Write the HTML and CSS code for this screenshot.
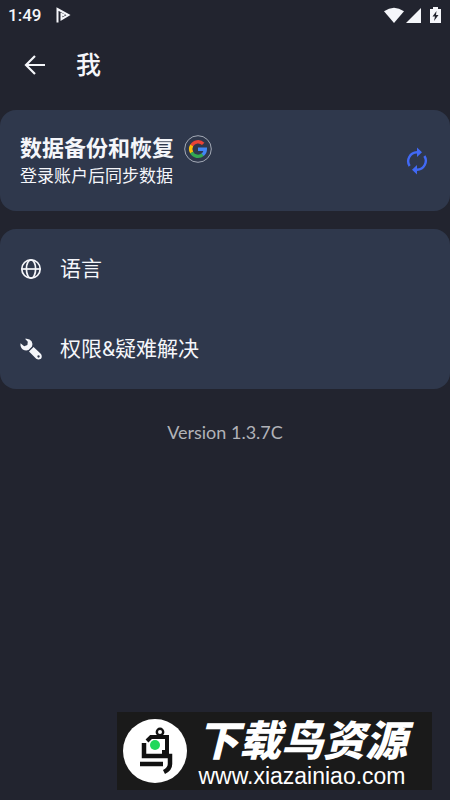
FILE: index.html
```html
<!DOCTYPE html>
<html lang="zh-CN">
<head>
<meta charset="utf-8">
<meta name="viewport" content="width=device-width, initial-scale=1">
<title>我</title>
<link rel="stylesheet" href="styles.css">
</head>
<body>
<div class="status">
  <span class="clock">1:49</span>
  <svg class="play" width="16" height="16" viewBox="0 0 16 16" fill="none" stroke="currentColor" stroke-width="2"><path d="M2.500 15.500V2L13.500 8 6.500 12.200V7l3 1.500"/></svg>
  <svg class="signals" width="58" height="18" viewBox="0 0 58 18" fill="currentColor"><path d="M0 5.200Q10 -1.800 20 5.200L10 17z"/><path d="M37 2v15H22z"/><path fill-rule="evenodd" d="M49 1h5v2h3v14H46V3h3zM52.500 5L48.500 10.500h2.500L50 15l4.500-6H52z"/></svg>
</div>
<header class="topbar">
  <button class="icon-button" type="button" aria-label="返回">
    <svg width="22" height="22" viewBox="0 0 22 22" fill="none" stroke="currentColor" stroke-width="2.200"><path d="M21 11H2.500M11 2L2 11l9 9"/></svg>
  </button>
  <h1 class="title">我</h1>
</header>
<main class="content">
  <section class="card backup">
    <div class="backup-text">
      <h2 class="backup-title">数据备份和恢复
        <svg width="28" height="28" viewBox="0 0 28 28" fill="none"><circle cx="14" cy="14" r="13.300" stroke="#a3a9b5"/><g stroke-width="3.400"><path stroke="#ea4335" d="M7.700 10.500A7.300 7.300 0 0 1 19.200 8.900"/><path stroke="#fbbc05" d="M7.700 10.300a7.300 7.300 0 0 0 0 7.400"/><path stroke="#34a853" d="M7.600 17.500a7.300 7.300 0 0 0 11.300 2"/><path stroke="#4285f4" d="M14 14.200h7.300a7.300 7.300 0 0 1-2.600 5.500"/></g></svg>
      </h2>
      <p class="backup-note">登录账户后同步数据</p>
    </div>
    <button class="icon-button sync" type="button" aria-label="同步">
      <svg width="22" height="28" viewBox="0 0 22 28"><g fill="none" stroke="currentColor" stroke-width="2.400"><path d="M3.600 19A9 9 0 0 1 11 5.200h1"/><path d="M18.400 9A9 9 0 0 1 11 22.800h-1"/></g><path fill="currentColor" d="M11 .5L16 5.200 11 10zM11 18v9.500L6 22.800z"/></svg>
    </button>
  </section>
  <nav class="card menu">
    <a class="row" href="#language">
      <svg width="22" height="22" viewBox="0 0 22 22" fill="none" stroke="currentColor" stroke-width="1.700"><circle cx="11" cy="11" r="9.200"/><ellipse cx="11" cy="11" rx="4.600" ry="9.200"/><path d="M2 11h18"/></svg>
      <span>语言</span>
    </a>
    <a class="row" href="#permissions">
      <svg width="22" height="22" viewBox="0 0 22 22" fill="currentColor"><path d="M5 .8Q9.500 0 11.600 3.200 13 5.600 12 8.500L8.500 12Q5.500 13 2.800 11.400 0 9.300.5 5.200L4.200 8.200 7.400 7 7.800 3.800z"/><path fill-rule="evenodd" d="M9 13.600L13.600 9 21 16Q22.500 18.500 21 20.700 18.500 22.300 16.200 20.700zM18.500 17.300a1.200 1.200 0 1 0 .1 2.400 1.200 1.200 0 0 0-.1-2.400z"/></svg>
      <span>权限&amp;疑难解决</span>
    </a>
  </nav>
  <p class="version">Version 1.3.7C</p>
</main>
<footer class="brand">
  <svg class="brand-logo" width="66" height="66" viewBox="0 0 66 66" fill="none" stroke="#111"><circle cx="33" cy="33" r="32" fill="#fff" stroke="none"/><circle cx="38" cy="14" r="3.200" stroke-width="2.400"/><path stroke-width="4" d="M25 23l4-4h16v15h-5"/><path stroke-width="4.500" d="M22 25v13h26v8q0 5-6 8M18 46h23"/><circle cx="33" cy="27" r="5" fill="#20d85a" stroke="none"/></svg>
  <div class="brand-text">
    <strong class="brand-name">下载鸟资源</strong>
    <span class="brand-url">www.xiazainiao.com</span>
  </div>
</footer>
</body>
</html>
```
FILE: styles.css
```css
* { box-sizing: border-box; }
body {
  margin: 0;
  min-height: 100vh;
  display: flex;
  flex-direction: column;
  background: #22242f;
  color: #f5f6fa;
  font-family: Roboto, "Noto Sans CJK SC", sans-serif;
}
svg { display: block; flex: none; }
h1, h2, p { margin: 0; }
.status {
  display: flex;
  align-items: center;
  height: 30px;
  padding: 0 8px;
}
.clock { font-size: 17px; font-weight: 500; }
.play { margin-left: 14px; }
.signals { margin-left: auto; }
.topbar {
  display: flex;
  align-items: center;
  gap: 30px;
  height: 70px;
  padding: 0 24px;
}
.icon-button {
  padding: 0;
  border: 0;
  background: none;
  color: inherit;
}
.title {
  padding-top: 2px;
  font-size: 25px;
  line-height: 36px;
  font-weight: 500;
}
.content {
  display: flex;
  flex-direction: column;
  gap: 18px;
  padding-top: 10px;
}
.card { background: #2f384c; border-radius: 16px; }
.backup {
  display: flex;
  align-items: center;
  justify-content: space-between;
  padding: 24px 22px 23px 20px;
}
.backup-title {
  display: flex;
  align-items: center;
  gap: 10px;
  font-size: 22px;
  line-height: 30px;
  font-weight: 700;
}
.backup-note { font-size: 17px; line-height: 24px; }
.sync { color: #4169f5; }
.row {
  display: flex;
  align-items: center;
  gap: 18px;
  height: 80px;
  padding: 0 20px;
  color: inherit;
  font-size: 21px;
  line-height: 30px;
  text-decoration: none;
}
.version {
  padding-top: 12px;
  color: #b1b2b8;
  font-family: Lato, sans-serif;
  font-size: 18px;
  line-height: 26px;
  text-align: center;
}
.brand {
  display: flex;
  align-items: center;
  align-self: flex-end;
  height: 78px;
  margin: auto 18px 10px;
  padding: 0 20px 0 5px;
  gap: 4px;
  background: #1a1a1a;
  color: #fff;
}
.brand-text {
  display: flex;
  flex-direction: column;
  align-items: center;
  gap: 4px;
  padding-top: 10px;
}
.brand-name {
  padding: 0 5px;
  font-size: 42px;
  line-height: 36px;
  font-weight: 900;
  font-style: italic;
}
.brand-url {
  font-family: "Liberation Sans", sans-serif;
  font-size: 23px;
  line-height: 24px;
}
```
